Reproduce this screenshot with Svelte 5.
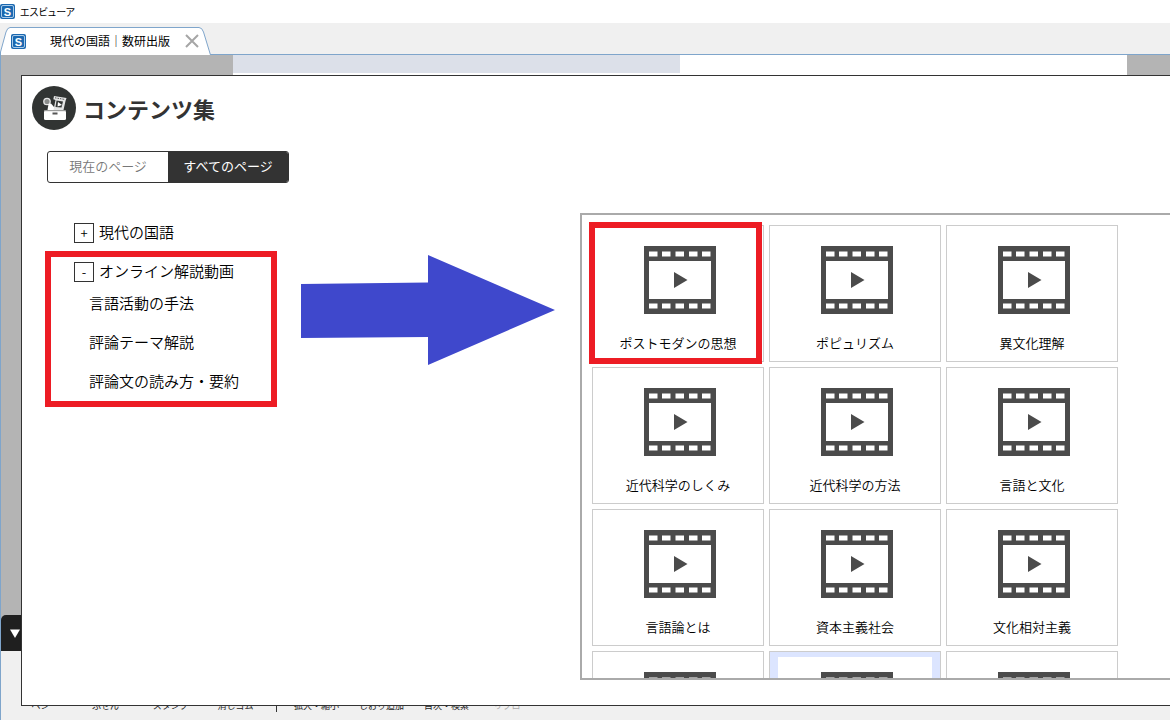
<script>
  let scope = $state('all');
  let open = $state({ book: false, online: true });
  let selected = $state(10);

  const topics = ['言語活動の手法', '評論テーマ解説', '評論文の読み方・要約'];
  const videos = [
    'ポストモダンの思想', 'ポピュリズム', '異文化理解',
    '近代科学のしくみ', '近代科学の方法', '言語と文化',
    '言語論とは', '資本主義社会', '文化相対主義',
    '', '', ''
  ];
  const tools = ['ペン', 'ふせん', 'スタンプ', '消しゴム'];
  const navTools = ['拡大・縮小', 'しおり追加', '目次・検索'];
  const holes = [5, 18, 31.5, 45, 58];
</script>

{#snippet logo()}
  <svg class="logo" viewBox="0 0 15 15" aria-hidden="true">
    <rect width="15" height="15" rx="2" fill="#1b68b0" />
    <rect x="1.5" y="1.5" width="12" height="12" rx="1.5" fill="none" stroke="#a9cbe8" stroke-width="1" />
    <text x="7.5" y="11.6" text-anchor="middle">S</text>
  </svg>
{/snippet}

<div class="app">
  <header class="titlebar">
    {@render logo()}
    <span>エスビューア</span>
  </header>

  <nav class="tabs">
    <div class="tab">
      <svg class="tab-shape" viewBox="0 0 211 28" aria-hidden="true">
        <path d="M0.5 28 L0.5 25 L6 5 Q7.5 0.5 10 0.5 H199 Q202 0.5 203.500 5 L210.500 28 Z" fill="#fff" />
        <path d="M0.5 28 L0.5 25 L6 5 Q7.5 0.5 10 0.5 H199 Q202 0.5 203.500 5 L210.500 28" fill="none" stroke="#7fa5cb" />
      </svg>
      {@render logo()}
      <span class="tab-name">現代の国語｜数研出版</span>
      <button class="close" aria-label="閉じる">
        <svg viewBox="0 0 14 14"><path d="M1 1 L13 13 M13 1 L1 13" stroke="#a6a6a6" stroke-width="2" /></svg>
      </button>
    </div>
  </nav>

  <div class="workspace">
    <div class="stage">
      <div class="spread"><div class="band"></div></div>
      <button class="drawer" aria-label="開く">
        <svg viewBox="0 0 10 9"><path d="M0 0.500 H10 L5 9 Z" fill="#fff" /></svg>
      </button>
    </div>
    <footer class="toolbar">
      {#each tools as t}<button>{t}</button>{/each}
      <i class="sep"></i>
      {#each navTools as t}<button>{t}</button>{/each}
      <button class="last" disabled>リプロ</button>
    </footer>

    <section class="modal">
      <div class="head">
        <svg class="badge" viewBox="0 0 44 44" aria-hidden="true">
          <circle cx="22" cy="22" r="22" fill="#313433" />
          <circle cx="15" cy="15.500" r="3.200" fill="#8b8d8c" stroke="#e6e6e6" stroke-width="1.300" />
          <path d="M16.500 18 L19 17.500 L22 21 V24 H15.500 Z" fill="#fff" />
          <path d="M22 10 L34.500 12 L33.500 15 L31.500 24 H21.500 L23.500 14 L21.300 13.300 Z" fill="#e4e5e5" />
          <path d="M24.500 14.500 L31 15.500 L29.500 21.500 L23.500 21 Z" fill="#353837" />
          <path d="M26 16 L30 19 L25.500 20.500 Z" fill="#fff" />
          <path d="M23 11.800 L33 13.500" stroke="#555" stroke-width="1" stroke-dasharray="1.500 1" />
          <rect x="12" y="24.500" width="22" height="9.500" rx="1.500" fill="#fff" />
          <path d="M12 24.700 H34" stroke="#9a9c9b" />
          <rect x="20.500" y="26.500" width="5" height="2" fill="#555" />
        </svg>
        <h1>コンテンツ集</h1>
      </div>

      <div class="segment">
        <button class:on={scope === 'current'} onclick={() => (scope = 'current')}>現在のページ</button>
        <button class:on={scope === 'all'} onclick={() => (scope = 'all')}>すべてのページ</button>
      </div>

      <div class="columns">
        <div class="tree">
          <div class="node">
            <button aria-labelledby="l-book" onclick={() => (open.book = !open.book)}>{open.book ? '-' : '+'}</button>
            <span id="l-book">現代の国語</span>
          </div>
          <div class="node">
            <button aria-labelledby="l-online" onclick={() => (open.online = !open.online)}>{open.online ? '-' : '+'}</button>
            <span id="l-online">オンライン解説動画</span>
          </div>
          {#if open.online}
            <ul>
              {#each topics as t}<li><a href="#topic">{t}</a></li>{/each}
            </ul>
          {/if}
          <div class="mark mark-tree"></div>
          <svg class="arrow" viewBox="0 0 254 110" aria-hidden="true">
            <path d="M0 29 L127 27.500 V0 L254 55 L127 110 V82 L0 83 Z" fill="#3f48cc" />
          </svg>
        </div>

        <div class="panel">
          {#each videos as v, i}
            <button class="card" class:selected={i === selected} aria-label={v || '動画'} onclick={() => (selected = i)}>
              <span class="face">
                <svg class="film" viewBox="0 0 72 68" aria-hidden="true">
                  <rect width="72" height="68" fill="#4b4b4b" />
                  <rect x="5" y="15" width="62" height="38" fill="#fff" />
                  {#each holes as x}
                    <rect {x} y="5.500" width="8.500" height="5" fill="#fff" />
                    <rect {x} y="57.500" width="8.500" height="5" fill="#fff" />
                  {/each}
                  <path d="M30 26 L43.500 34 L30 42 Z" fill="#4b4b4b" />
                </svg>
                <span class="caption">{v}</span>
              </span>
              {#if i === 0}<span class="mark mark-card"></span>{/if}
            </button>
          {/each}
        </div>
      </div>
    </section>
  </div>
</div>

<style>
  :global(body) { margin: 0; background: #f0f0f0; }
  .app, .app * { box-sizing: border-box; }
  .app {
    height: 100vh;
    display: flex;
    flex-direction: column;
    overflow: hidden;
    color: #000;
    font-family: "Noto Sans CJK JP", sans-serif;
    font-weight: 350;
  }
  button { font: inherit; color: inherit; background: none; border: 0; padding: 0; margin: 0; cursor: pointer; }
  svg { display: block; }

  .titlebar {
    height: 23px;
    flex: none;
    display: flex;
    align-items: center;
    gap: 5px;
    background: #fff;
    font-size: 10px;
    font-weight: 400;
    line-height: 22px;
    font-feature-settings: "palt";
  }
  .logo { width: 15px; height: 15px; flex: none; }
  .logo text { font: bold 11px "Liberation Sans", sans-serif; fill: #fff; }

  .tabs { height: 32px; flex: none; padding-top: 4px; background: #f0f0f0; border-bottom: 1px solid #7fa5cb; font-weight: 400; }
  .tab {
    position: relative;
    width: 211px;
    height: 28px;
    display: flex;
    align-items: center;
    padding: 0 12px 0 11px;
  }
  .tab > * { position: relative; }
  .tab .tab-shape { position: absolute; left: 0; top: 0; width: 211px; height: 28px; }
  .tab-name { flex: 1; padding-left: 24px; font-size: 12px; line-height: 24px; white-space: nowrap; }
  .close { width: 14px; height: 14px; }

  .workspace { position: relative; flex: 1; min-height: 0; display: flex; flex-direction: column; border-left: 1px solid #7fa5cb; }
  .stage { flex: 1; display: flex; flex-direction: column; justify-content: space-between; background: #b4b4b4; }
  .spread { height: 400px; margin: 0 43px 0 232px; background: #fff; }
  .band { width: 50%; height: 18px; background: #dce0e9; }
  .drawer { width: 36px; height: 36px; padding-left: 9px; background: #1f1f1f; border-radius: 5px 0 0 0; }
  .drawer svg { width: 10px; height: 9px; }

  .toolbar { height: 69px; flex: none; display: flex; padding: 47px 0 0 7px; background: #f0f0f0; font-size: 9px; font-weight: 400; line-height: 16px; color: #222; }
  .toolbar button { width: 65px; height: 16px; white-space: nowrap; }
  .toolbar .last { width: 56px; color: #aaa; }
  .sep { width: 1px; height: 14px; margin: 0 7px 0 8px; background: #333; }

  .modal {
    position: absolute;
    inset: 20px 0 14px 20px;
    display: flex;
    flex-direction: column;
    padding: 10px 0 25px;
    background: #fff;
    border: 1px solid #333;
    border-right: 0;
  }
  .head { display: flex; align-items: center; gap: 7px; padding-left: 10px; }
  .badge { width: 44px; height: 44px; }
  h1 { margin: 0; font-size: 22px; line-height: 44px; font-weight: 700; color: #333; }

  .segment {
    width: 242px;
    height: 32px;
    flex: none;
    display: grid;
    grid-template-columns: 1fr 1fr;
    margin: 21px 0 30px 25px;
    border: 1px solid #333;
    border-radius: 3px;
    overflow: hidden;
    font-size: 13px;
    line-height: 28px;
    color: #777;
  }
  .segment button { padding-bottom: 2px; }
  .segment .on { background: #333; color: #fff; font-weight: 400; }

  .columns { flex: 1; min-height: 0; display: flex; }
  .tree { position: relative; flex: none; width: 558px; padding: 0 0 0 52px; font-size: 15px; }
  .node { height: 39px; display: flex; align-items: center; gap: 5px; line-height: 24px; }
  .node span { padding-bottom: 2px; }
  .node button { width: 20px; height: 20px; border: 1px solid #333; font-size: 13px; line-height: 16px; }
  ul { list-style: none; margin: 0; padding: 0 0 0 15px; }
  li { height: 39px; line-height: 24px; }
  a { color: inherit; text-decoration: none; }

  .mark { position: absolute; border: 6px solid #ed1c24; pointer-events: none; }
  .mark-tree { left: 23px; top: 38px; width: 232px; height: 156px; }
  .mark-card { inset: -4px 1px -3px -4px; }
  .arrow { position: absolute; left: 279px; top: 42px; width: 254px; height: 110px; }

  .panel {
    flex: 1;
    min-width: 0;
    display: grid;
    grid-template-columns: repeat(3, 172px);
    grid-auto-rows: 137px;
    gap: 5px;
    padding: 10px;
    border: 2px solid #aaa;
    border-right: 0;
    overflow: hidden;
  }
  .card { position: relative; border: 1px solid #ccc; background: #fff; font-size: 13px; line-height: 20px; }
  .selected { background: #dce5ff; padding: 5px 8px; }
  .face { display: flex; flex-direction: column; align-items: center; height: 100%; padding-top: 20px; background: #fff; }
  .selected .face { padding-top: 15px; }
  .film { width: 72px; height: 68px; margin-left: 4px; flex: none; }
  .caption { margin-top: 19px; white-space: nowrap; }
</style>
